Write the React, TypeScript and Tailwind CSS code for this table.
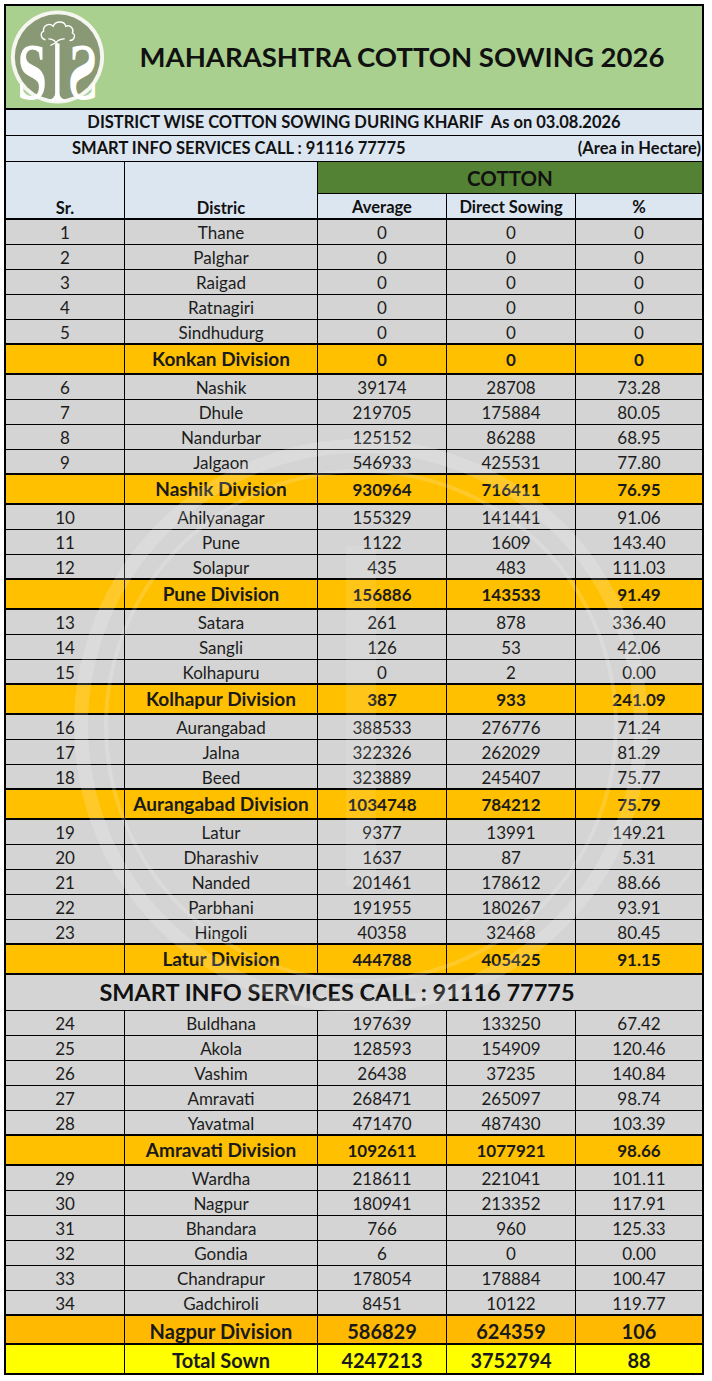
import React from "react";

type District = { sr: number; name: string; avg: string; ds: string; pct: string };
type Division = { name: string; avg: string; ds: string; pct: string; h?: string; big?: boolean; bg?: string };
type Item =
  | { kind: "d"; row: District }
  | { kind: "div"; row: Division }
  | { kind: "banner" };

const d = (sr: number, name: string, avg: string, ds: string, pct: string): Item => ({
  kind: "d",
  row: { sr, name, avg, ds, pct },
});
const dv = (name: string, avg: string, ds: string, pct: string, extra: Partial<Division> = {}): Item => ({
  kind: "div",
  row: { name, avg, ds, pct, ...extra },
});

const items: Item[] = [
  d(1, "Thane", "0", "0", "0"),
  d(2, "Palghar", "0", "0", "0"),
  d(3, "Raigad", "0", "0", "0"),
  d(4, "Ratnagiri", "0", "0", "0"),
  d(5, "Sindhudurg", "0", "0", "0"),
  dv("Konkan Division", "0", "0", "0"),
  d(6, "Nashik", "39174", "28708", "73.28"),
  d(7, "Dhule", "219705", "175884", "80.05"),
  d(8, "Nandurbar", "125152", "86288", "68.95"),
  d(9, "Jalgaon", "546933", "425531", "77.80"),
  dv("Nashik Division", "930964", "716411", "76.95"),
  d(10, "Ahilyanagar", "155329", "141441", "91.06"),
  d(11, "Pune", "1122", "1609", "143.40"),
  d(12, "Solapur", "435", "483", "111.03"),
  dv("Pune Division", "156886", "143533", "91.49"),
  d(13, "Satara", "261", "878", "336.40"),
  d(14, "Sangli", "126", "53", "42.06"),
  d(15, "Kolhapuru", "0", "2", "0.00"),
  dv("Kolhapur Division", "387", "933", "241.09"),
  d(16, "Aurangabad", "388533", "276776", "71.24"),
  d(17, "Jalna", "322326", "262029", "81.29"),
  d(18, "Beed", "323889", "245407", "75.77"),
  dv("Aurangabad Division", "1034748", "784212", "75.79"),
  d(19, "Latur", "9377", "13991", "149.21"),
  d(20, "Dharashiv", "1637", "87", "5.31"),
  d(21, "Nanded", "201461", "178612", "88.66"),
  d(22, "Parbhani", "191955", "180267", "93.91"),
  d(23, "Hingoli", "40358", "32468", "80.45"),
  dv("Latur Division", "444788", "405425", "91.15"),
  { kind: "banner" },
  d(24, "Buldhana", "197639", "133250", "67.42"),
  d(25, "Akola", "128593", "154909", "120.46"),
  d(26, "Vashim", "26438", "37235", "140.84"),
  d(27, "Amravati", "268471", "265097", "98.74"),
  d(28, "Yavatmal", "471470", "487430", "103.39"),
  dv("Amravati Division", "1092611", "1077921", "98.66"),
  d(29, "Wardha", "218611", "221041", "101.11"),
  d(30, "Nagpur", "180941", "213352", "117.91"),
  d(31, "Bhandara", "766", "960", "125.33"),
  d(32, "Gondia", "6", "0", "0.00"),
  d(33, "Chandrapur", "178054", "178884", "100.47"),
  d(34, "Gadchiroli", "8451", "10122", "119.77"),
  dv("Nagpur Division", "586829", "624359", "106", { h: "h-[29px]", big: true, bg: "bg-[#ffb900]" }),
  dv("Total Sown", "4247213", "3752794", "88", { h: "h-[28px]", big: true, bg: "bg-[#ffff00]" }),
];

const grid = "grid grid-cols-[119px_193px_129px_129px_126px]";
const cell = "flex items-center justify-center border-r border-black";
const lastCell = "flex items-center justify-center";

function Logo() {
  return (
    <svg viewBox="0 0 100 100" width="96" height="96" className="shrink-0 overflow-visible">
      <circle cx="49.5" cy="50" r="48.5" fill="#f4f6ef" />
      <circle cx="49.5" cy="50" r="44.5" fill="#8a9975" />
      {/* cotton boll */}
      <path
        d="M37 32 c-5 -1 -6 -7 -2 -9 c-1 -6 6 -9 10 -5 c2 -6 12 -6 13 0 c5 -2 9 3 7 7 c4 2 2 8 -3 8"
        fill="none"
        stroke="#fff"
        strokeWidth="1.4"
      />
      <path
        d="M40 31 c3 0 6 1 8 4 c2 -3 5 -4 9 -4 M48 35 l-6 3 M48 35 l3 3"
        fill="none"
        stroke="#fff"
        strokeWidth="1.3"
      />
      {/* stem of the I */}
      <path d="M47 36 h4.6 v52 c0 3 3 6 7 7.5 h-18.6 c4 -1.5 7 -4.5 7 -7.5 z" fill="#fff" />
      <text
        x="0"
        y="0"
        transform="translate(23 94) scale(0.9 1.36)"
        textAnchor="middle"
        fill="#fff"
        fontSize="62"
        fontWeight="700"
        fontFamily="'Liberation Serif', serif"
      >
        S
      </text>
      <g transform="translate(99 0) scale(-1 1)">
        <text
          x="0"
          y="0"
          transform="translate(23 94) scale(0.9 1.36)"
          textAnchor="middle"
          fill="#fff"
          fontSize="62"
          fontWeight="700"
          fontFamily="'Liberation Serif', serif"
        >
          S
        </text>
      </g>
    </svg>
  );
}

function Watermark() {
  return (
    <svg
      viewBox="0 0 600 600"
      width="600"
      height="600"
      className="pointer-events-none absolute left-[55px] top-[420px] opacity-[0.16]"
    >
      <circle cx="300" cy="300" r="280" fill="none" stroke="#fff" strokeWidth="14" />
      <circle cx="300" cy="300" r="255" fill="none" stroke="#fff" strokeWidth="4" />
      <path d="M285 120 h30 v340 h-30 z" fill="#fff" opacity="0.6" />
    </svg>
  );
}

function DistrictRow({ r, border }: { r: District; border: string }) {
  return (
    <div className={`${grid} h-[25px] ${border} border-black bg-[#d4d4d4] text-[17px] text-[#1c1c1c]`}>
      <div className={cell}>{r.sr}</div>
      <div className={cell}>{r.name}</div>
      <div className={cell}>{r.avg}</div>
      <div className={cell}>{r.ds}</div>
      <div className={lastCell}>{r.pct}</div>
    </div>
  );
}

function DivisionRow({ r, last }: { r: Division; last: boolean }) {
  const bg = r.bg ?? "bg-[#ffc000]";
  const h = r.h ?? "h-[30px]";
  const name = r.big ? "text-[20px]" : "text-[19px]";
  const num = r.big ? "text-[20px]" : "text-[17px]";
  return (
    <div className={`${grid} ${h} ${last ? "" : "border-b-2"} border-black ${bg} font-bold text-[#1a1a1a]`}>
      <div className={cell}></div>
      <div className={`${cell} ${name}`}>{r.name}</div>
      <div className={`${cell} ${num}`}>{r.avg}</div>
      <div className={`${cell} ${num}`}>{r.ds}</div>
      <div className={`${lastCell} ${num}`}>{r.pct}</div>
    </div>
  );
}

export default function App() {
  return (
    <div className="relative h-[1381px] w-[712px] bg-white [font-family:Lato,'Noto_Sans',sans-serif] text-black">
      <div className="relative ml-[4px] mt-[4px] w-[700px] overflow-hidden border-2 border-black">
        {/* title */}
        <div className="flex h-[104px] items-center border-b-2 border-black bg-[#a9d08e] pl-[4px]">
          <Logo />
          <div className="flex-1 pr-[4px] text-center text-[27.5px] font-bold text-[#111]">
            MAHARASHTRA COTTON SOWING 2026
          </div>
        </div>
        <div className="flex h-[26px] items-center justify-center border-b border-black bg-[#dce6f1] text-[16.5px] font-bold text-[#111]">
          DISTRICT WISE COTTON SOWING DURING KHARIF&nbsp;&nbsp;As on 03.08.2026
        </div>
        <div className="flex h-[26px] items-center justify-between border-b border-black bg-[#dce6f1] pl-[66px] pr-[1px] text-[16.5px] font-bold text-[#111]">
          <span>SMART INFO SERVICES CALL : 91116 77775</span>
          <span>(Area in Hectare)</span>
        </div>
        {/* header */}
        <div
          className={`${grid} h-[58px] grid-rows-[32px_24px] border-b-2 border-black bg-[#dce6f1] text-[16.5px] font-bold leading-[18px] text-[#111]`}
        >
          <div className="row-span-2 flex items-end justify-center border-r border-black pb-[1px]">Sr.</div>
          <div className="row-span-2 flex items-end justify-center border-r border-black pb-[1px]">Distric</div>
          <div className="col-span-3 flex items-center justify-center border-b border-black bg-[#548235] text-[20.5px] text-[#111]">
            COTTON
          </div>
          <div className={`${cell} pt-[2px]`}>Average</div>
          <div className={`${cell} pt-[2px]`}>Direct Sowing</div>
          <div className={`${lastCell} pt-[2px]`}>%</div>
        </div>
        {items.map((it, i) => {
          const next = items[i + 1];
          if (it.kind === "banner") {
            return (
              <div
                key={i}
                className="flex h-[36px] items-center justify-center border-b border-black bg-[#d4d4d4] pr-[34px] text-[23.5px] font-bold text-[#111]"
              >
                SMART INFO SERVICES CALL : 91116 77775
              </div>
            );
          }
          if (it.kind === "div") {
            return <DivisionRow key={i} r={it.row} last={!next} />;
          }
          const border = next && next.kind === "div" ? "border-b-2" : "border-b";
          return <DistrictRow key={i} r={it.row} border={border} />;
        })}
        <Watermark />
      </div>
    </div>
  );
}
